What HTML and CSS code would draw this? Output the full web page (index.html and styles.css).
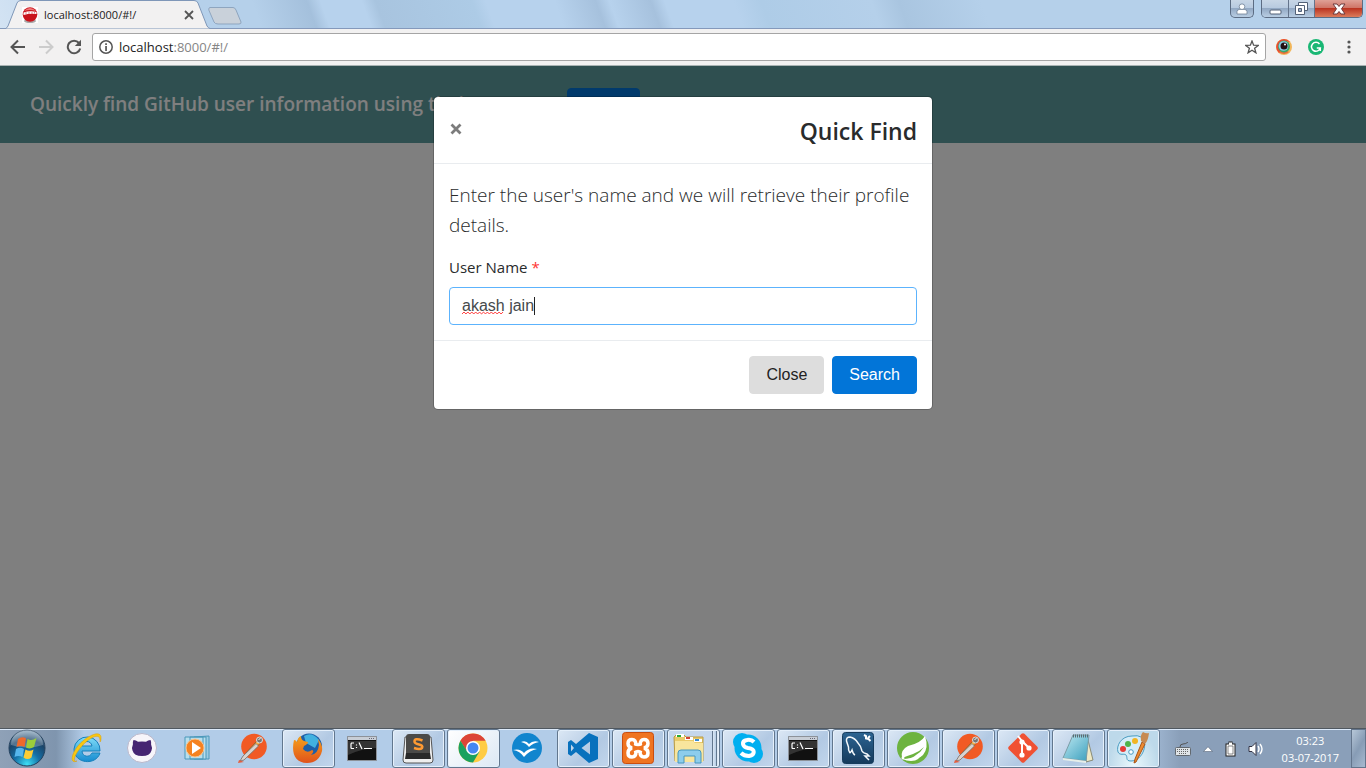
FILE: index.html
```html
<!DOCTYPE html>
<html lang="en">
<head>
<meta charset="utf-8">
<title>localhost:8000/#!/</title>
<link rel="stylesheet" href="styles.css">
</head>
<body>
<div class="titlebar">
  <div class="tab">
    <svg class="tab-shape" viewBox="0 0 206 29" aria-hidden="true"><path d="M0 29Q2 28 3 26L12 3Q13 .5 16 .5H189Q192 .5 193 3L202 26Q203 28 206 29Z" fill="#f2f1f1" stroke="#7f97b8"/></svg>
    <svg class="favicon" viewBox="0 0 16 16" aria-hidden="true"><path fill="#fff" d="M0 0h16v16H0z"/><ellipse cx="8" cy="14" rx="6" ry="2" fill="#aaa"/><circle cx="8" cy="7.500" r="7.300" fill="#c9141c"/><path d="M2 4Q8-2 14 4Q8 2 2 4z" fill="#ef7777"/><path d="M1.500 7.500V5.500Q8 3.500 14.500 5v2Q8 6 1.500 8z" fill="#fff"/><path d="M4 5v2M7 5v2M10 5v2M12.500 5v1.500" stroke="#d4545a" stroke-width=".7"/></svg>
    <span class="tab-title">localhost:8000/#!/</span>
    <button class="icon-button tab-close" aria-label="Close tab"><svg width="10" height="10" viewBox="0 0 10 10"><path d="M1 1l8 8M9 1L1 9" stroke="#555" stroke-width="1.800"/></svg></button>
  </div>
  <button class="icon-button new-tab" aria-label="New tab"><svg width="34" height="18" viewBox="0 0 34 18"><path d="M2 .5H25Q27 .5 28 3L33 15Q33.500 17 31 17H10Q7 17 6 15L.8 3Q.5.500 2 .5z" fill="#c9d1da" stroke="#8ea5bf"/></svg></button>
  <div class="window-controls">
    <button class="win user" aria-label="User"><svg width="12" height="12" viewBox="0 0 12 12"><g fill="#fff" stroke="#6f8096" stroke-width=".8"><path d="M1 11V8.500Q1 6.500 3.500 6.500h5Q11 6.500 11 8.500V11z"/><circle cx="6" cy="3.700" r="2.800"/></g></svg></button>
    <div class="win-group">
      <button class="win" aria-label="Minimize"><svg width="13" height="12" viewBox="0 0 13 12"><rect x="1" y="7" width="11" height="4" rx="1" fill="#fff" stroke="#536176"/></svg></button>
      <button class="win" aria-label="Restore"><svg width="13" height="13" viewBox="0 0 13 13"><path d="M3.500.500h9v8h-9z" fill="#fff" stroke="#536176"/><path d="M.5 3.500h9v9h-9z" fill="#fff" stroke="#536176"/><path d="M3.500 6.500h3v3h-3z" fill="#9fb1c8" stroke="#536176"/></svg></button>
      <button class="win close-window" aria-label="Close window"><svg width="14" height="12" viewBox="0 0 14 12"><path d="M1 1h4l2 2.500L9 1h4L9.500 5.800 13 11H9L7 8.500 5 11H1l3.500-5.200z" fill="#fff" stroke="#6d3a3c"/></svg></button>
    </div>
  </div>
</div>

<div class="toolbar">
  <button class="icon-button" aria-label="Back"><svg width="16" height="16" viewBox="0 0 16 16"><path d="M15 8H2M8 1.500L1.500 8 8 14.500" fill="none" stroke="#555" stroke-width="2"/></svg></button>
  <button class="icon-button" aria-label="Forward"><svg width="16" height="16" viewBox="0 0 16 16"><path d="M1 8h13M8 1.500L14.500 8 8 14.500" fill="none" stroke="#ccc" stroke-width="2"/></svg></button>
  <button class="icon-button" aria-label="Reload"><svg width="16" height="16" viewBox="0 0 16 16"><path d="M13 4A6.300 6.300 0 1 0 14.200 9.500" fill="none" stroke="#555" stroke-width="2"/><path d="M15 .8V7H8.800z" fill="#555"/></svg></button>
  <div class="omnibox">
    <svg width="14" height="14" viewBox="0 0 14 14" aria-hidden="true"><circle cx="7" cy="7" r="6.200" fill="none" stroke="#555" stroke-width="1.500"/><path d="M6.200 3.200h1.700v1.700H6.200zM6.200 6h1.700v5H6.200z" fill="#555"/></svg>
    <a class="address" href="#!/">localhost<span>:8000/#!/</span></a>
    <button class="icon-button" aria-label="Bookmark"><svg width="14" height="14" viewBox="0 0 14 14"><path d="M7 1l1.600 4.200 4.700.2-3.700 2.900 1.300 4.500L7 10.300l-3.900 2.500 1.300-4.500L.7 5.400l4.700-.2z" fill="none" stroke="#555" stroke-width="1.300"/></svg></button>
  </div>
  <button class="icon-button extension" aria-label="Eye extension"><svg width="16" height="16" viewBox="0 0 16 16"><circle cx="8" cy="8" r="8" fill="#f2b65a"/><path d="M8 0a8 8 0 0 0-5 14l3-2 3-10 5 1A8 8 0 0 0 8 0z" fill="#e94b35"/><path d="M3 13a8 8 0 0 0 10 0l-5-3z" fill="#ee6b3a"/><circle cx="8" cy="7.500" r="6" fill="#39a86b"/><circle cx="7.500" cy="7" r="4.800" fill="#8dcbe8"/><circle cx="8" cy="7" r="3.500" fill="#201014"/><circle cx="9" cy="5.500" r="1" fill="#fff"/></svg></button>
  <button class="icon-button extension" aria-label="Grammar extension"><svg width="16" height="16" viewBox="0 0 16 16"><circle cx="8" cy="8" r="8" fill="#19b774"/><path d="M11.500 5A4.500 4.500 0 1 0 12.300 9H8.800M12.300 8.500V12" fill="none" stroke="#fff" stroke-width="1.500"/></svg></button>
  <button class="icon-button menu" aria-label="Menu"><svg width="4" height="14" viewBox="0 0 4 14"><g fill="#555"><circle cx="2" cy="2" r="1.600"/><circle cx="2" cy="7" r="1.600"/><circle cx="2" cy="12" r="1.600"/></g></svg></button>
</div>

<main class="page">
  <header class="page-header">
    <h1>Quickly find GitHub user information using their</h1>
    <button class="btn primary launch" aria-label="Search users"></button>
  </header>
  <div class="backdrop">
    <form class="modal" role="dialog" aria-labelledby="modal-title">
      <div class="modal-header">
        <button type="button" class="dismiss" aria-label="Dismiss"><svg width="14" height="14" viewBox="0 0 14 14"><path d="M2.500 2.500l9 9M11.500 2.500l-9 9" stroke="#7c7c7c" stroke-width="2.800"/></svg></button>
        <h2 id="modal-title">Quick Find</h2>
      </div>
      <div class="modal-body">
        <p>Enter the user's name and we will retrieve their profile details.</p>
        <label for="username">User Name <span class="required">*</span></label>
        <div class="field">
          <input id="username" type="text" value="akash jain" spellcheck="false">
          <svg class="squiggle" viewBox="0 0 44 4" aria-hidden="true"><path d="M0 3l2-2 2 2 2-2 2 2 2-2 2 2 2-2 2 2 2-2 2 2 2-2 2 2 2-2 2 2 2-2 2 2 2-2 2 2 2-2 2 2 2-2" fill="none" stroke="#f33"/></svg>
          <span class="caret"></span>
        </div>
      </div>
      <div class="modal-footer">
        <button type="button" class="btn secondary">Close</button>
        <button type="button" class="btn primary">Search</button>
      </div>
    </form>
  </div>
</main>

<footer class="taskbar">
  <svg class="defs" aria-hidden="true">
    <defs>
      <radialGradient id="orb" cx=".5" cy=".95" r=".9"><stop offset="0" stop-color="#3fe0f5"/><stop offset=".4" stop-color="#146fa6"/><stop offset=".75" stop-color="#1b4468"/><stop offset="1" stop-color="#7e9bb3"/></radialGradient>
      <linearGradient id="blue" x2="0" y2="1"><stop stop-color="#7fdcf8"/><stop offset="1" stop-color="#168bd0"/></linearGradient>
      <linearGradient id="glass" x2="1" y2="1"><stop stop-color="#bfe9f2"/><stop offset="1" stop-color="#3a9fbd"/></linearGradient>
      <linearGradient id="navy" x2="0" y2="1"><stop stop-color="#2c6492"/><stop offset="1" stop-color="#153a5c"/></linearGradient>
      <linearGradient id="fire" x2="0" y2="1"><stop stop-color="#f6a21c"/><stop offset="1" stop-color="#e0521b"/></linearGradient>
      <symbol id="cmd" viewBox="0 0 32 32"><path fill="#111" stroke="#8d9299" d="M1.500 4.500h29v24h-29z"/><path fill="#c8ced6" d="M2 5h28v3H2z"/><path fill="#667" d="M23 6h1v1h-1zM25 6h1v1h-1zM27 6h1v1h-1z"/><path d="M2 9h28v7Q14 17 2 23z" fill="#333"/><path d="M8 11H5.500L5 12v4l.5.500H8M10.500 12.500v1M10.500 15v1M13 10.500l3 6.500M18 16.500h8" fill="none" stroke="#fff" stroke-width="1.200"/></symbol>
      <symbol id="postman" viewBox="0 0 32 32"><circle cx="18" cy="14.500" r="12.800" fill="#f15a24"/><path d="M10 21l8-9 4-4 2.500 2.500-4 5z" fill="#fbb040" stroke="#94562b" stroke-width=".8"/><path d="M20 11.500l2.500 2.500L8 28l-4 1 3-5z" fill="#d8d3cf" stroke="#7a6b62" stroke-width=".8"/><circle cx="23.500" cy="8" r="3" fill="#777" stroke="#ddd"/><path d="M22.500 7.500l2-1" stroke="#fff"/><path d="M3 28l5 2-6 1z" fill="#e35d3e"/></symbol>
    </defs>
  </svg>
  <button class="start" aria-label="Start"><svg width="38" height="38" viewBox="0 0 38 38"><circle cx="19" cy="19" r="18" fill="url(#orb)" stroke="#24415d"/><path d="M3 16A16 16 0 0 1 35 16Q19 21 3 16z" fill="#fff" opacity=".25"/><path d="M10 10q4-3 8-.5L16.500 18q-4-2-8 0z" fill="#ee6a2c"/><path d="M19.500 10q4 2.500 9-1L26 18q-4 2.500-8 .5z" fill="#9bce3b"/><path d="M8 20q4-2.500 8 0l-1.500 8q-4-2-8 0z" fill="#56b6ec"/><path d="M17.500 20.500q4 2.500 8 0l-2 8q-4 3-8 0z" fill="#fccd35"/></svg></button>
  <nav class="tasks" aria-label="Applications">
    <button class="task" aria-label="Internet Explorer"><svg viewBox="0 0 32 32"><path d="M3 17a13 13 0 1 1 26 2H11c0 6 8 7 10 2h8c-4 13-26 11-26-4zm8-3h10c-1-6-9-6-10 0z" fill="url(#blue)" stroke="#1681bc" fill-rule="evenodd"/><path d="M6 29C-3 33 1 17 13 8 22 1 31-1 30 7c0 2-1 3-1 3C30-1 18 6 11 14 3 23 1 31 6 29z" fill="#f9c712" stroke="#d89a08" stroke-width=".5"/></svg></button>
    <button class="task" aria-label="GitHub"><svg viewBox="0 0 32 32"><circle cx="16" cy="16" r="14.500" fill="#f7f5fa" stroke="#b9b7ca"/><path d="M7.500 8Q10 8 12 9.800q4-.6 8 0Q22 8 24.500 8q1 2 .6 4.500 1.400 3 .4 6Q24 24 16 24t-9.500-5.500q-1-3 .4-6Q6.500 10 7.500 8z" fill="#452472"/></svg></button>
    <button class="task" aria-label="Media Player"><svg viewBox="0 0 32 32"><path d="M13 5l15-1v23H13z" fill="#9bcbe3" stroke="#4b98ba"/><path d="M9 5h16v22H9zM4 5h18v22H4z" fill="#b7deed" stroke="#4b98ba"/><circle cx="14" cy="16" r="9" fill="#f58220" stroke="#fac48e"/><path d="M11 10v12l9-6z" fill="#fff"/></svg></button>
    <button class="task" aria-label="Postman"><svg><use href="#postman"/></svg></button>
    <button class="task open" aria-label="Firefox"><svg viewBox="0 0 32 32"><circle cx="17" cy="14.500" r="13" fill="#1d5fa8"/><path d="M12 4Q20-1 27 8l-4 8-9-5z" fill="#41b1df"/><path d="M2 8q2 0 3 2 1-5 4-6 0 4 3 5l4 1q0 2-4 4l-1 3q4 5 9 1 3 1-1 5 7-1 8-10l-1-6q5 6 4 12-3 12-15 12C3 31-1 21 2 8z" fill="url(#fire)"/></svg></button>
    <button class="task" aria-label="Command Prompt"><svg><use href="#cmd"/></svg></button>
    <button class="task open" aria-label="Sublime Text"><svg viewBox="0 0 32 32"><path d="M3 5h26l2 23q0 3-3 3H4q-3 0-3-3z" fill="#eee" stroke="#555"/><rect x="4" y="2" width="24" height="22" rx="3" fill="#4b4a48"/><path d="M4 21h24l1 6H3z" fill="#292929"/><path d="M20.500 8.500q-8-3-8 1 0 2 4.500 3 4.500 1 3 3.500-2 2-8 0" fill="none" stroke="#ff9a32" stroke-width="2.500"/></svg></button>
    <button class="task open active" aria-label="Chrome"><svg viewBox="0 0 32 32"><circle cx="16" cy="16" r="14.500" fill="#fc4"/><path d="M3.400 8.800A14.500 14.500 0 0 1 28.600 8.800H16L10 19.500z" fill="#dc4437"/><path d="M3.400 8.800A14.500 14.500 0 0 0 16 30.500l6.500-11L10 19z" fill="#1aa15f"/><circle cx="16" cy="16" r="7" fill="#fff"/><circle cx="16" cy="16" r="5.500" fill="#4587f3"/></svg></button>
    <button class="task" aria-label="OpenOffice"><svg viewBox="0 0 32 32"><circle cx="16" cy="16" r="15" fill="#1185ce"/><path d="M10 10q5-2 8 2 4-4 10-2-6 1-10 5-3-4-8-5zM2 18q7-2 11 3 5-6 13-4-7 1-13 8-4-6-11-7z" fill="#fff"/></svg></button>
    <button class="task open" aria-label="Visual Studio Code"><svg viewBox="0 0 32 32"><path d="M22 1l9 4v22l-9 4L9 20l-5 4-3-2V10l3-2 5 4zM23 9.500L14.500 16l8.500 6.500zM4 12.500v7L7 16z" fill="#0871bd" fill-rule="evenodd"/></svg></button>
    <button class="task open" aria-label="XAMPP"><svg viewBox="0 0 32 32"><rect x=".5" y=".5" width="31" height="31" rx="3" fill="#ef7421" stroke="#c94d10"/><path d="M12.500 11.500Q16 14 19.500 11.500M12.500 20.500Q16 18 19.500 20.500" fill="none" stroke="#fff" stroke-width="3"/><g fill="none" stroke="#fff" stroke-width="3.500"><path d="M14 13.500Q14 7.500 10 7.500T6 11.500Q6 15 10 16Q6 17 6 21T10 25Q14 25 14 19.500M18 13.500Q18 7.500 22 7.500T26 11.500Q26 15 22 16Q26 17 26 21T22 25Q18 25 18 19.500"/></g></svg></button>
    <button class="task open stacked" aria-label="File Explorer"><svg viewBox="0 0 32 32"><path d="M1 5l2-2h8l2 2h17v24H2z" fill="#eacb6a" stroke="#b99b44"/><path d="M3 2h8v3H3z" fill="#fff"/><path d="M4 3h4v2H4z" fill="#2bab36"/><path d="M12 5h8v3h-8z" fill="#fff"/><path d="M13 5h4v2h-4z" fill="#d44432"/><path d="M21 7h8v3h-8z" fill="#fff"/><path d="M22 7h4v2h-4z" fill="#378bd3"/><path d="M2 9h18l2 2h8v19H2z" fill="#f8e59d"/><path d="M5 31V21q0-3 3-3h17q3 0 3 3v10h-6v-7H11v7z" fill="#8dcdec" stroke="#4696bd"/></svg></button>
    <button class="task open" aria-label="Skype"><svg viewBox="0 0 32 32"><circle cx="10" cy="10" r="9" fill="#00aff0"/><circle cx="22" cy="22" r="9" fill="#00aff0"/><circle cx="16" cy="16" r="13.500" fill="#00aff0"/><path d="M22 10q-3-3-7-2c-6 1-5 7 1 8 8 1 7 7 1 8q-5 0-8-3" fill="none" stroke="#fff" stroke-width="4"/></svg></button>
    <button class="task open" aria-label="Command Prompt"><svg><use href="#cmd"/></svg></button>
    <button class="task open" aria-label="MySQL Workbench"><svg viewBox="0 0 32 32"><rect x=".5" y=".5" width="31" height="31" rx="3" fill="url(#navy)" stroke="#163c5d"/><path d="M8 21q-2-3-1.500-6L4.500 9Q4 5 8 5q5 1 8 6 3 3 4 8 1 2 5 3l2 2h-4l4 4M8 21q1-1 2-3 1 4 3 5" fill="none" stroke="#f3f8fb" stroke-width="1.500"/><path d="M22 3l2 1v2.500l2.500.5 2 2M26 6l2-2" fill="none" stroke="#fff" stroke-width="2"/></svg></button>
    <button class="task open" aria-label="Spring"><svg viewBox="0 0 32 32"><circle cx="16" cy="16" r="16" fill="#6db33f"/><path d="M28 4q4 12-2 19-6 6-20 4 9 0 13-4 5-3 8-8-5 5-11 7-6 2-11 4Q3 18 11 14 24 11 28 4z" fill="#fff"/><path d="M6 27q14 1 20-8-3 10-12 10-5 0-8-2z" fill="#fff"/><circle cx="6" cy="26" r="1.500" fill="#fff"/></svg></button>
    <button class="task open" aria-label="Postman"><svg><use href="#postman"/></svg></button>
    <button class="task open" aria-label="Git"><svg viewBox="0 0 32 32"><rect x="5" y="5" width="22" height="22" rx="2" transform="rotate(45 16 16)" fill="#f05133"/><path d="M11 4l4 5v14M15 9l6 6" fill="none" stroke="#fff" stroke-width="2"/><g fill="#fff"><circle cx="15" cy="10" r="2.600"/><circle cx="15" cy="23" r="2.600"/><circle cx="22" cy="16" r="2.600"/></g></svg></button>
    <button class="task open" aria-label="Notepad"><svg viewBox="0 0 32 32"><path d="M25 4l6 24-7 2z" fill="#eee9c6" stroke="#898b76"/><path d="M11 3h16l-3 26-23-3z" fill="url(#glass)" stroke="#7b9da7"/><path d="M1 26l23 3v2L1 28z" fill="#e7efe9"/><path d="M11 4h16" stroke="#5d6970" stroke-width="3" stroke-dasharray="1 1"/></svg></button>
    <button class="task open paint" aria-label="Paint"><svg viewBox="0 0 32 32"><path d="M15 4C4 4-1 14 1 20c2 4 6 1 8 3s-1 6 5 6c12 0 18-19 10-24q-3-2-9-1z" fill="#d5edf8" stroke="#4a9cc1"/><circle cx="6" cy="17" r="3" fill="#e43b37"/><circle cx="11" cy="12" r="3" fill="#50b34a"/><circle cx="18" cy="9" r="3" fill="#f2b522"/><circle cx="14" cy="20" r="2.300" fill="#fff" stroke="#4a9cc1"/><path d="M25 10l3 2-9 18-2 1 1-4z" fill="#ef8b2f" stroke="#a75417"/><path d="M24 9q-1-6 2-9 3 2 6 1-1 8-4 11z" fill="#c78a52"/></svg></button>
  </nav>
  <div class="tray">
    <button class="icon-button" aria-label="Keyboard"><svg width="16" height="14" viewBox="0 0 16 14"><path d="M5 5q0-3 3-3t5-2" fill="none" stroke="#555"/><rect x=".5" y="5.500" width="15" height="8" rx="1" fill="#e0e4e7" stroke="#626970"/><path d="M2 7.500h12M2 9.500h12M4 11.500h8" stroke="#666" stroke-dasharray="1 1"/></svg></button>
    <button class="icon-button" aria-label="Show hidden icons"><svg width="10" height="6" viewBox="0 0 10 6"><path d="M.5 5.500L5 .7l4.500 4.800z" fill="#fff" stroke="#59677a" stroke-width=".6"/></svg></button>
    <button class="icon-button" aria-label="Battery"><svg width="11" height="16" viewBox="0 0 11 16"><path d="M3.500.500h4v2h3v13H.5v-13h3z" fill="#222"/><path d="M4 1.500h3v2h2.500v11h-8v-11H4z" fill="#fff"/><path d="M3 5h5v8H3z" fill="#fff" stroke="#555" stroke-width=".7"/></svg></button>
    <button class="icon-button" aria-label="Volume"><svg width="16" height="16" viewBox="0 0 16 16"><path d="M1 5.500h3l4-4v13l-4-4H1z" fill="#fff" stroke="#334"/><path d="M10 5q2 3 0 6M12 3q4 5 0 10" fill="none" stroke="#fff" stroke-width="1.400"/></svg></button>
    <time class="clock" datetime="2017-07-03T03:23"><span>03:23</span><span>03-07-2017</span></time>
  </div>
  <button class="show-desktop" aria-label="Show desktop"></button>
</footer>
</body>
</html>
```
FILE: styles.css
```css
* { box-sizing: border-box; }
body { margin: 0; height: 100vh; display: flex; flex-direction: column; overflow: hidden; font-family: "Open Sans", "Noto Sans", sans-serif; color: #292b2c; }
button { font: inherit; margin: 0; padding: 0; }
svg { display: block; flex: none; }
.icon-button { display: flex; align-items: center; justify-content: center; border: 0; background: none; }

.titlebar {
  flex: none; height: 29px; display: flex; align-items: flex-start; padding: 0 3px 0 5px; border-bottom: 1px solid #8499bb;
  background: linear-gradient(70deg, #d3e3f3 0, #b5d0ea 10%, #b5d0ea 19%, #a4c0dc 23%, #b7d2ed 24%, #b7d2ed 27%, #a8c4df 28%, #adcbe6 35%, #b7d2ed 36%, #b7d2ed 41%, #a6c1dd 44%, #b7d2ed 45%, #a6c1dd 48%, #b7d2ed 49%, #b7d2ed 54%, #aecce7 56%, #b5d0ea 64%, #a9c5e0 66%, #b5d0ea 72%, #b5d0ea 100%);
}
.tab { position: relative; flex: none; width: 206px; height: 29px; display: flex; align-items: center; padding: 0 17px; }
.tab-shape { position: absolute; inset: 0; }
.favicon { position: relative; width: 16px; height: 16px; margin-right: 6px; }
.tab-title { position: relative; flex: 1; font-size: 11px; color: #222; white-space: nowrap; }
.tab-close { position: relative; }
.new-tab { margin: 7px 0 0 -3px; }
.window-controls { margin-left: auto; display: flex; gap: 7px; }
.win { height: 18px; width: 26px; display: flex; align-items: center; justify-content: center; border: 0; background: linear-gradient(#c8d6e6, #b6c9df 50%, #93a9c4 50%, #b8cde2); }
.win.user, .win-group { border: 1px solid #5c6c83; border-top: 0; border-radius: 0 0 5px 5px; overflow: hidden; }
.win.user { width: 24px; }
.win-group { display: flex; height: 18px; }
.win-group .win { height: 17px; }
.win-group .win + .win { border-left: 1px solid #64748c; }
.win-group .close-window { width: 48px; background: linear-gradient(#dfa197, #ce7163 50%, #bb3522 50%, #dc7c5b); }

.toolbar { flex: none; height: 37px; display: flex; align-items: center; gap: 12px; padding: 0 15px 0 10px; background: #f2f1f1; border-bottom: 1px solid #a9b3b3; }
.omnibox { flex: 1; height: 28px; margin-left: -2px; display: flex; align-items: center; gap: 6px; padding: 0 6px; background: #fff; border: 1px solid #a5a5a5; border-radius: 3px; }
.address { flex: 1; font-size: 13px; color: #222; text-decoration: none; }
.address span { color: #858585; }
.extension { margin: 0 6px 0 -2px; }
.menu { margin-left: 5px; }

.page { flex: 1; position: relative; background: #fff; }
.page-header { height: 77px; display: flex; align-items: flex-start; padding: 22px 30px; background: #5f9ea0; }
h1 { margin: 0; flex: 0 0 537px; font-size: 19px; font-weight: 600; line-height: 32px; color: #fff; white-space: nowrap; }
.btn { height: 38px; padding: 0 16px; border: 1px solid; border-radius: 4px; font-family: "Liberation Sans", Arial, sans-serif; font-size: 16px; }
.primary { background: #0275d8; border-color: #0275d8; color: #fff; }
.secondary { background: #ddd; border-color: #ddd; color: #222; }
.launch { width: 73px; }
.backdrop { position: absolute; inset: 0; padding: 30px 16px; background: rgba(0, 0, 0, .5); }
.modal { max-width: 500px; margin: 0 auto; background: #fff; background-clip: padding-box; border: 1px solid rgba(0, 0, 0, .2); border-radius: 5px; }
.modal-header { display: flex; align-items: flex-start; justify-content: space-between; height: 67px; padding: 16px 15px; border-bottom: 1px solid #e9ecef; }
.dismiss { border: 0; background: none; margin-top: 9px; }
h2 { margin: 0; font-size: 23px; font-weight: 600; line-height: 36px; }
.modal-body { padding: 16px 15px 15px; }
.modal-body p { margin: 0 0 15px; font-size: 19px; font-weight: 300; line-height: 30px; }
label { display: block; margin-bottom: 8px; font-size: 15px; line-height: 24px; }
.required { color: #f33; }
.field { position: relative; }
input { display: block; width: 100%; height: 38px; padding: 0 12px; border: 1px solid #5cb3fd; border-radius: 4px; font-family: "Liberation Sans", Arial, sans-serif; font-size: 16px; color: #464a4c; }
.squiggle { position: absolute; left: 13px; top: 24px; width: 43px; height: 4px; }
.caret { position: absolute; left: 85px; top: 10px; width: 1px; height: 18px; background: #222; }
.modal-footer { display: flex; justify-content: flex-end; gap: 8px; padding: 15px; border-top: 1px solid #e9ecef; }

.taskbar {
  flex: none; height: 40px; display: flex; border-top: 1px solid #505860; box-shadow: inset 0 1px #dceafa;
  background: linear-gradient(90deg, #8fa1b7 0, #7f95ae 56px, #b2cce8 84px, #b2cce8 1130px, #8a9fb9 1180px);
}
.defs { position: absolute; width: 0; height: 0; }
.start { flex: none; width: 62px; padding: 0 0 2px 8px; border: 0; background: none; }
.tasks { display: flex; gap: 2px; }
.task { width: 53px; height: 39px; display: flex; align-items: center; justify-content: center; padding: 0 3px 2px 0; border: 1px solid transparent; border-radius: 3px; background: none; }
.task svg { width: 32px; height: 32px; }
.task.open { padding-right: 1px; border-color: #62778e; box-shadow: inset 0 0 0 1px #e5f0fb; background: linear-gradient(135deg, #dce8f5, #b2c9e3 60%, #c2d6ec); }
.task.active { background: linear-gradient(135deg, #fff, #dce8f4); }
.task.paint { background: radial-gradient(at bottom, #eaf9fd, #bdd9ea 70%); }
.task.stacked { justify-content: flex-start; padding-left: 5px; background: linear-gradient(90deg, transparent 44px, #62778e 44px, #62778e 45px, #dce8f5 45px, #b5cce4 48px, #62778e 48px, #62778e 49px, #dce8f5 49px), #c5d7ec; }
.tray { flex: 1; display: flex; align-items: center; justify-content: flex-end; gap: 12px; padding-right: 12px; }
.clock { display: flex; flex-direction: column; margin-left: 6px; align-items: center; font-size: 11px; line-height: 17px; color: #fff; }
.show-desktop { flex: none; width: 15px; border: 1px solid #63758c; background: linear-gradient(120deg, #b7c7d8, #879cb5 50%, #a7bad0); }
```
